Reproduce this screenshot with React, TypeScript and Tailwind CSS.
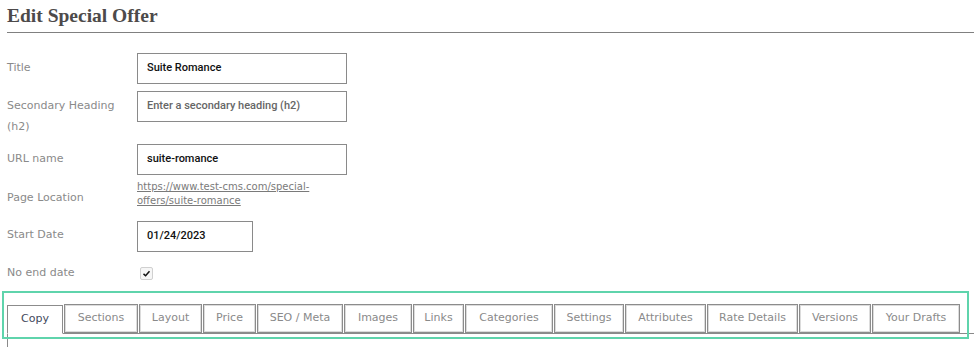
const tabs = [
  { label: "Copy", w: "w-[56px]" },
  { label: "Sections", w: "w-[74px]" },
  { label: "Layout", w: "w-[63px]" },
  { label: "Price", w: "w-[53px]" },
  { label: "SEO / Meta", w: "w-[86px]" },
  { label: "Images", w: "w-[68px]" },
  { label: "Links", w: "w-[51px]" },
  { label: "Categories", w: "w-[88px]" },
  { label: "Settings", w: "w-[70px]" },
  { label: "Attributes", w: "w-[81px]" },
  { label: "Rate Details", w: "w-[91px]" },
  { label: "Versions", w: "w-[72px]" },
  { label: "Your Drafts", w: "w-[88px]" },
];

const Label = ({ children, className = "" }: { children: React.ReactNode; className?: string }) => (
  <div className={`w-[130px] shrink-0 pr-2 text-[11px] leading-[21px] text-[#8a8a8a] ${className}`}>{children}</div>
);

const TextInput = ({ value, placeholder, className = "w-[210px]" }: { value?: string; placeholder?: string; className?: string }) => (
  <div
    className={`${className} h-[31px] border border-[#8a8a8a] px-[9px] flex items-center whitespace-nowrap text-[11px] font-medium font-['Roboto',sans-serif] ${
      value ? "text-[#111]" : "text-[#666]"
    }`}
  >
    {value ?? placeholder}
  </div>
);

export default function App() {
  return (
    <div className="relative w-[974px] h-[347px] overflow-hidden bg-white pl-[7px] font-['DejaVu_Sans',sans-serif]">
      <h1 className="pt-[2px] pb-[2px] leading-[28px] text-[19.5px] font-bold text-[#4d4a4a] border-b border-[#808080] font-['Liberation_Serif',serif]">
        Edit Special Offer
      </h1>

      <div className="mt-[20px] flex flex-col">
        <div className="flex mb-[7px]">
          <Label className="pt-[4px]">Title</Label>
          <TextInput value="Suite Romance" />
        </div>
        <div className="flex mb-[7px]">
          <Label className="pt-[4px]">Secondary Heading (h2)</Label>
          <TextInput placeholder="Enter a secondary heading (h2)" />
        </div>
        <div className="flex mb-[5px]">
          <Label className="pt-[4px]">URL name</Label>
          <TextInput value="suite-romance" />
        </div>
        <div className="flex mb-[13px]">
          <Label className="pt-[7px]">Page Location</Label>
          <a className="w-[190px] text-[10px] leading-[14px] text-[#7a7a7a] underline">
            https://www.test-cms.com/special-offers/suite-romance
          </a>
        </div>
        <div className="flex mb-[6px]">
          <Label className="pt-[3px]">Start Date</Label>
          <TextInput value="01/24/2023" className="w-[116px]" />
        </div>
        <div className="flex">
          <Label className="pt-[4px]">No end date</Label>
          <div className="pt-[9px] pl-[3px]">
            <span className="flex items-center justify-center w-[13px] h-[13px] rounded-[2px] border border-[#d0d0d0] bg-[#f6f6f6]">
              <svg viewBox="0 0 12 12" className="w-[9px] h-[9px]">
                <path d="M2 6.5 L4.8 9 L10 3" fill="none" stroke="#111" strokeWidth="2" />
              </svg>
            </span>
          </div>
        </div>
      </div>

      <div className="mt-[21px] flex items-end gap-[1px] border-b border-[#8a8a8a]">
        {tabs.map((t, i) => (
          <div
            key={t.label}
            className={`${t.w} shrink-0 h-[29px] flex items-center justify-center text-[11px] border border-[#8c8c8c] shadow-[inset_0_0_0_1px_#dcdcdc] ${
              i === 0 ? "bg-white text-[#3f4a5c] border-b-white -mb-px shadow-none" : "text-[#8a8a8a]"
            }`}
          >
            {t.label}
          </div>
        ))}
      </div>
      <div className="h-[20px] border-l border-[#8a8a8a]" />

      <div className="absolute left-[2px] top-[291px] w-[967px] h-[48px] border-2 border-[#5fd4ac] pointer-events-none" />
    </div>
  );
}
